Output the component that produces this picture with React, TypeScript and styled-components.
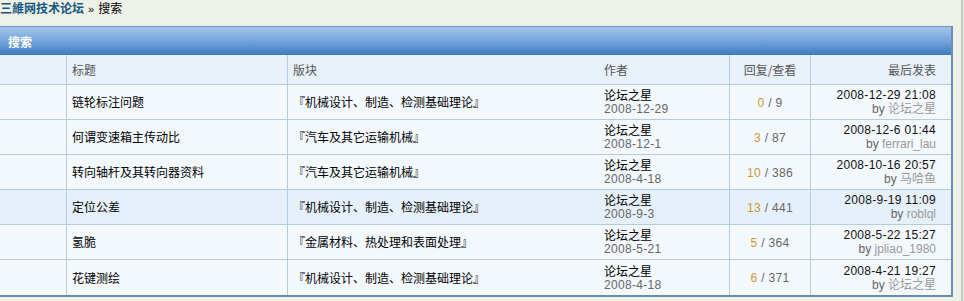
import React from "react";
import styled, { createGlobalStyle } from "styled-components";

const Global = createGlobalStyle`
  html, body { margin: 0; padding: 0; background: #eef1e8; }
  body {
    font-family: "Liberation Sans", Arial, "Noto Sans CJK SC", sans-serif;
    font-size: 12px;
    color: #000;
  }
`;

const Page = styled.div`
  width: 961px;
  min-height: 301px;
  border-right: 2px solid #c4c6c0;
  box-sizing: content-box;
`;

const Crumb = styled.div`
  height: 17px;
  line-height: 16px;
  margin-bottom: 9px;
  font-family: "Noto Sans CJK SC", sans-serif;
  font-size: 12px;
  color: #000;
  a {
    color: #16577f;
    font-weight: bold;
    text-decoration: none;
  }
  span.sep {
    font-family: "Liberation Sans", Arial, sans-serif;
    font-size: 11px;
    margin: 0 4px;
  }
`;

const Box = styled.div`
  width: 951px;
  border-top: 1px solid #6d95be;
  border-right: 2px solid #6c8fb3;
  border-bottom: 2px solid #6a8aaa;
  box-sizing: content-box;
`;

const Bar = styled.div`
  height: 28px;
  display: flex;
  align-items: center;
  padding-left: 8px;
  background: linear-gradient(#a2c5ec, #7aa8dc 45%, #3f79bf);
  color: #fff;
  font-weight: bold;
  font-family: "Noto Sans CJK SC", sans-serif;
  font-size: 12px;
`;

const Row = styled.div<{ $bg: string; $h: number }>`
  display: grid;
  grid-template-columns: 67px 221px 311px 131px 81px 140px;
  height: ${(p) => p.$h}px;
  background: ${(p) => p.$bg};
  border-bottom: 1px solid #b7cbde;
  box-sizing: border-box;
  &:last-child { border-bottom: 0; }
`;

const Cell = styled.div<{ $border?: boolean; $align?: string }>`
  display: flex;
  flex-direction: column;
  justify-content: center;
  align-items: ${(p) => p.$align || "flex-start"};
  padding: 0 5px;
  border-right: ${(p) => (p.$border ? "1px solid #b7cbde" : "0")};
  box-sizing: border-box;
  line-height: 14px;
  font-family: "Noto Sans CJK SC", sans-serif;
  font-size: 12px;
  white-space: nowrap;
  overflow: hidden;
`;

const LastCell = styled(Cell)`
  padding-right: 15px;
`;

const HeadText = styled.span`
  color: #555;
`;

const Num = styled.span`
  font-family: "Liberation Sans", Arial, sans-serif;
  font-size: 12px;
  letter-spacing: 0.3px;
`;

const Gray = styled(Num)`
  color: #666;
`;

const Reply = styled(Num)`
  color: #cc9a33;
`;

const Dark = styled(Num)`
  color: #111;
`;

const By = styled.span`
  color: #666;
  font-family: "Liberation Sans", Arial, sans-serif;
  font-size: 12px;
  a {
    color: #9a9a9a;
    text-decoration: none;
    font-family: "Liberation Sans", Arial, "Noto Sans CJK SC", sans-serif;
  }
`;

type Item = {
  title: string;
  forum: string;
  date: string;
  replies: number;
  views: number;
  last: string;
  by: string;
  hl?: boolean;
};

const items: Item[] = [
  { title: "链轮标注问题", forum: "『机械设计、制造、检测基础理论』", date: "2008-12-29", replies: 0, views: 9, last: "2008-12-29 21:08", by: "论坛之星" },
  { title: "何谓变速箱主传动比", forum: "『汽车及其它运输机械』", date: "2008-12-1", replies: 3, views: 87, last: "2008-12-6 01:44", by: "ferrari_lau" },
  { title: "转向轴杆及其转向器资料", forum: "『汽车及其它运输机械』", date: "2008-4-18", replies: 10, views: 386, last: "2008-10-16 20:57", by: "马哈鱼" },
  { title: "定位公差", forum: "『机械设计、制造、检测基础理论』", date: "2008-9-3", replies: 13, views: 441, last: "2008-9-19 11:09", by: "roblql", hl: true },
  { title: "氢脆", forum: "『金属材料、热处理和表面处理』", date: "2008-5-21", replies: 5, views: 364, last: "2008-5-22 15:27", by: "jpliao_1980" },
  { title: "花键测绘", forum: "『机械设计、制造、检测基础理论』", date: "2008-4-18", replies: 6, views: 371, last: "2008-4-21 19:27", by: "论坛之星" },
];

export default function App() {
  return (
    <Page>
      <Global />
      <Crumb>
        <a href="#">三維网技术论坛</a>
        <span className="sep">»</span>搜索
      </Crumb>
      <Box>
        <Bar>搜索</Bar>
        <Row $bg="#e8f1fa" $h={30}>
          <Cell $border />
          <Cell $border><HeadText>标题</HeadText></Cell>
          <Cell><HeadText>版块</HeadText></Cell>
          <Cell $border><HeadText>作者</HeadText></Cell>
          <Cell $border $align="center"><HeadText>回复/查看</HeadText></Cell>
          <LastCell $align="flex-end"><HeadText>最后发表</HeadText></LastCell>
        </Row>
        {items.map((it) => (
          <Row key={it.title} $bg={it.hl ? "#e6f0fb" : "#f3f8fd"} $h={35}>
            <Cell $border />
            <Cell $border>{it.title}</Cell>
            <Cell>{it.forum}</Cell>
            <Cell $border>
              <span>论坛之星</span>
              <Gray>{it.date}</Gray>
            </Cell>
            <Cell $border $align="center">
              <span>
                <Reply>{it.replies}</Reply>
                <Gray> / {it.views}</Gray>
              </span>
            </Cell>
            <LastCell $align="flex-end">
              <Dark>{it.last}</Dark>
              <By>
                by <a href="#">{it.by}</a>
              </By>
            </LastCell>
          </Row>
        ))}
      </Box>
    </Page>
  );
}
